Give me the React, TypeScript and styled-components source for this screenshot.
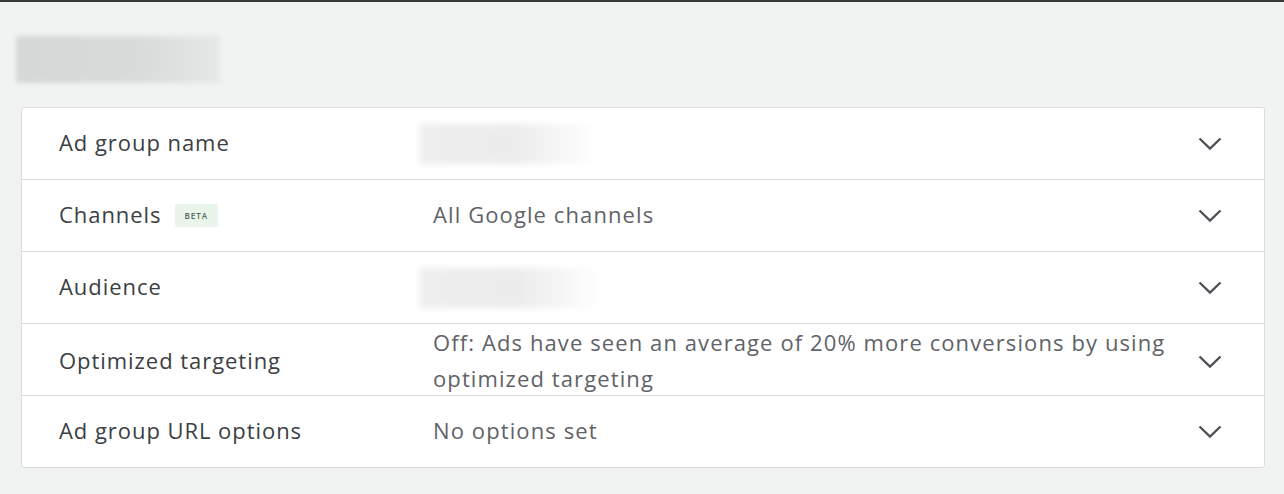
import React from 'react';
import styled, { createGlobalStyle } from 'styled-components';

const GlobalStyle = createGlobalStyle`
  html, body {
    margin: 0;
    padding: 0;
    background: #f1f3f3;
  }
  body {
    font-family: "Open Sans", Roboto, Arial, sans-serif;
  }
`;

const Page = styled.div`
  width: 1284px;
  height: 494px;
  box-sizing: border-box;
  border-top: 2px solid #3a3a3a;
  padding: 34px 19px 0 21px;
  background: #f1f3f3;
`;

const Heading = styled.div`
  width: 204px;
  height: 47px;
  margin-left: -5px;
  margin-bottom: 24px;
  background: linear-gradient(90deg, #d6d8d8 0%, #d9dbdb 60%, #e6e8e8 100%);
  filter: blur(2px);
`;

const Card = styled.div`
  background: #ffffff;
  border: 1px solid #dadce0;
  border-radius: 3px;
  overflow: hidden;
`;

const Row = styled.div`
  display: grid;
  grid-template-columns: 374px 1fr 24px;
  align-items: center;
  height: 71px;
  padding: 0 42px 0 37px;
  border-top: 1px solid #dadce0;

  &:first-child {
    border-top: none;
  }
`;

const Label = styled.div`
  display: flex;
  align-items: center;
  gap: 13px;
  font-size: 22px;
  letter-spacing: 0.95px;
  color: #3c4043;
  padding-bottom: 3px;
`;

const Beta = styled.span`
  font-size: 8px;
  letter-spacing: 1px;
  font-weight: 600;
  color: #56675a;
  background: #e9f4eb;
  padding: 6px 10px;
  border-radius: 2px;
  margin-top: 2px;
`;

const Value = styled.div`
  font-size: 22px;
  line-height: 36px;
  letter-spacing: 1.1px;
  color: #5f6368;
  padding-right: 8px;
  padding-bottom: 3px;
`;

const Placeholder = styled.div<{ $w: number }>`
  width: ${(p) => p.$w}px;
  height: 40px;
  margin-left: -13px;
  background: linear-gradient(90deg, #eeeeee 0%, #ececec 55%, #ffffff 100%);
  filter: blur(3px);
`;

const Chevron = () => (
  <svg width="24" height="14" viewBox="0 0 24 14" fill="none">
    <path d="M1.5 1.5 L12 11.5 L22.5 1.5" stroke="#4d5156" strokeWidth="2.4" />
  </svg>
);

type Item = { label: string; beta?: boolean; value?: string; blur?: number };

const items: Item[] = [
  { label: 'Ad group name', blur: 176 },
  { label: 'Channels', beta: true, value: 'All Google channels' },
  { label: 'Audience', blur: 182 },
  {
    label: 'Optimized targeting',
    value: 'Off: Ads have seen an average of 20% more conversions by using optimized targeting',
  },
  { label: 'Ad group URL options', value: 'No options set' },
];

export default function App() {
  return (
    <Page>
      <GlobalStyle />
      <Heading />
      <Card>
        {items.map((it) => (
          <Row key={it.label}>
            <Label>
              {it.label}
              {it.beta && <Beta>BETA</Beta>}
            </Label>
            {it.blur ? <Placeholder $w={it.blur} /> : <Value>{it.value}</Value>}
            <Chevron />
          </Row>
        ))}
      </Card>
    </Page>
  );
}
